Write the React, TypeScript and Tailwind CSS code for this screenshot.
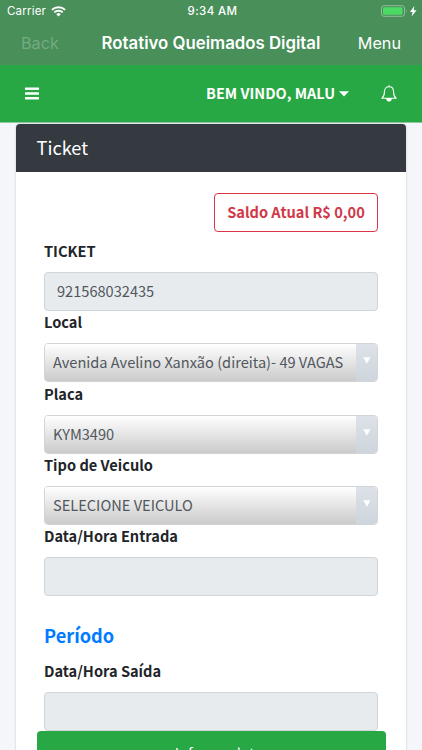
import { useState } from 'react'

const BASE_FONT = "font-['Noto_Sans_CJK_JP','Noto_Sans',sans-serif]"
const SYSTEM_FONT = "font-['Inter',sans-serif]"

interface SelectFieldProps {
  label: string
  value: string
}

interface TextFieldProps {
  label: string
  value?: string
}

function WifiIcon() {
  return (
    <svg width="15" height="11" viewBox="0 0 15 11" fill="none" stroke="white" strokeWidth="1.9">
      <path d="M0.9 3.9a9.4 9.4 0 0 1 13.2 0" />
      <path d="M3.3 6.4a6 6 0 0 1 8.4 0" />
      <path d="M7.5 10.6 5.2 8.2a3.3 3.3 0 0 1 4.6 0z" fill="white" stroke="none" />
    </svg>
  )
}

function BatteryIcon() {
  return (
    <svg width="36" height="13" viewBox="0 0 36 13" fill="none">
      <rect x="0.5" y="0.7" width="23" height="10.6" rx="2.4" stroke="#93bd9c" />
      <rect x="2" y="2.2" width="19.5" height="7.6" rx="1.2" fill="#4cd964" />
      <path d="M25 4.2q1.6 1.8 0 3.6z" fill="#93bd9c" />
      <path d="M33.3 1 29 6.9h2.6L30.6 11.6l5-6.4h-2.8z" fill="white" />
    </svg>
  )
}

function BellIcon() {
  return (
    <svg width="16" height="18" viewBox="0 0 16 18" fill="none" stroke="white" strokeWidth="1.1">
      <path d="M8 1.8c-2.7 0-4.5 2-4.5 4.6 0 4-1.2 5.6-2.7 6.9h14.4c-1.5-1.3-2.7-2.9-2.7-6.9C12.5 3.8 10.7 1.8 8 1.8z" strokeLinejoin="round" />
      <path d="M8 0.3v1.5" />
      <path d="M5.8 13.6a2.2 2.5 0 0 0 4.4 0z" fill="white" />
    </svg>
  )
}

function StatusBar() {
  return (
    <div className={`${SYSTEM_FONT} grid h-[22px] grid-cols-3 items-center pl-[7px] pr-[5px] pt-px text-[11.5px] leading-none tracking-[0.2px]`}>
      <div className="flex items-center gap-[5px]">
        <span>Carrier</span>
        <WifiIcon />
      </div>
      <span className="pl-px text-center font-medium tracking-[0.4px]">9:34 AM</span>
      <div className="flex justify-end">
        <BatteryIcon />
      </div>
    </div>
  )
}

function TextField({ label, value = '' }: TextFieldProps) {
  return (
    <div className="h-[71.3px]">
      <div className="h-[32px] text-[14.6px] font-bold leading-[22.6px] text-[#212529]">{label}</div>
      <div className="flex h-[39px] items-center rounded-[4px] border border-[#d0d5da] bg-[#e7ebee] px-3 pb-px text-[14.6px] text-[#50575d]">
        {value}
      </div>
    </div>
  )
}

function SelectField({ label, value }: SelectFieldProps) {
  return (
    <div className="h-[71.3px]">
      <div className="h-[32px] text-[14.6px] font-bold leading-[22.6px] text-[#212529]">{label}</div>
      <div className="flex h-[39px] overflow-hidden rounded-[4px] border border-[#d0d5da] text-[14.6px] text-[#50575d]">
        <div className="flex flex-1 items-center whitespace-nowrap bg-linear-to-b from-white to-[#cbcbcb] pb-px pl-2">{value}</div>
        <div className="flex w-[21px] shrink-0 justify-center bg-linear-to-b from-[#dee2e8] to-[#ced5dc] pt-[13px]">
          <svg width="8" height="7" viewBox="0 0 8 7">
            <path d="M0.3 0.3h7.2L3.9 6.7z" fill="white" />
          </svg>
        </div>
      </div>
    </div>
  )
}

export default function App() {
  const [ticket] = useState('921568032435')

  return (
    <div className={`${BASE_FONT} flex h-[750px] flex-col overflow-hidden bg-[#f4f6f9]`}>
      <header className="h-[65px] shrink-0 bg-[#488f5a] text-white">
        <StatusBar />
        <nav className={`${SYSTEM_FONT} grid h-[43px] grid-cols-[1fr_auto_1fr] items-center px-[21px] text-[16.2px]`}>
          <span className="text-[#75aa82]">Back</span>
          <span className="text-[16.8px] font-semibold">Rotativo Queimados Digital</span>
          <span className="text-right">Menu</span>
        </nav>
      </header>

      <div className="flex h-[58px] shrink-0 items-center border-b border-[#8fc9a0] bg-[#28a745] px-[25px] text-white">
        <svg width="14" height="13" viewBox="0 0 14 13" fill="white">
          <rect y="0.5" width="14" height="2.5" rx="0.5" />
          <rect y="5.2" width="14" height="2.5" rx="0.5" />
          <rect y="9.9" width="14" height="2.5" rx="0.5" />
        </svg>
        <span className="ml-auto pb-px text-[14.5px] font-bold">BEM VINDO, MALU</span>
        <svg className="ml-[4px] mr-[32px]" width="10" height="6" viewBox="0 0 10 6">
          <path d="M0 0.3h10L5 5.5z" fill="white" />
        </svg>
        <BellIcon />
      </div>

      <main className="mx-4 mt-px flex-1 rounded-t-[4px] bg-white shadow-[0_0_2px_rgba(0,0,0,0.25)]">
        <div className="flex h-[48px] items-center rounded-t-[4px] bg-[#343a40] px-[20.5px] text-[18.2px] text-white">Ticket</div>

        <div className="px-7 pt-[21px]">
          <div className="flex justify-end">
            <button type="button" className="h-[39px] w-[164px] rounded-[4px] border border-[#dc3545] pb-[2px] text-[14.6px] font-bold text-[#cf3948]">
              Saldo Atual R$ 0,00
            </button>
          </div>

          <div className="pt-2">
            <TextField label="TICKET" value={ticket} />
            <SelectField label="Local" value="Avenida Avelino Xanxão (direita)- 49 VAGAS" />
            <SelectField label="Placa" value="KYM3490" />
            <SelectField label="Tipo de Veiculo" value="SELECIONE VEICULO" />
            <TextField label="Data/Hora Entrada" />
          </div>

          <h2 className="h-[63.5px] pt-[25px] text-[18.2px] font-bold leading-[29px] text-[#007bff]">Período</h2>
          <TextField label="Data/Hora Saída" />
        </div>

        <button type="button" className="mx-[21px] -mt-[0.5px] block h-[45px] w-[349px] rounded-[4px] bg-[#28a745] pb-px pl-[14px] text-[14.6px] text-white">
          Informe data
        </button>
      </main>
    </div>
  )
}
